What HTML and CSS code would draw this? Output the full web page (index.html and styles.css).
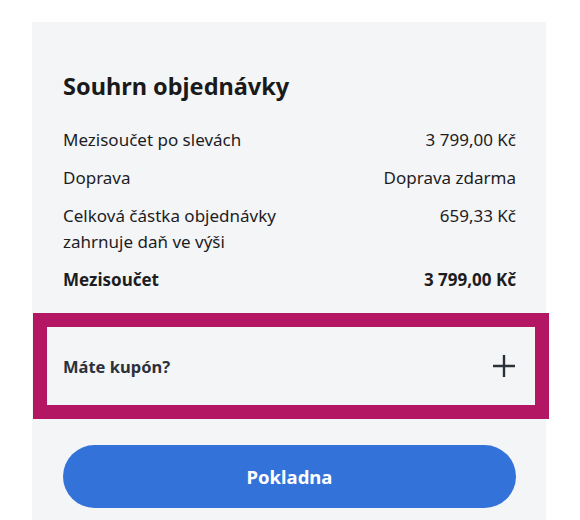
FILE: index.html
```html
<!DOCTYPE html>
<html lang="cs">
<head>
<meta charset="utf-8">
<link rel="stylesheet" href="styles.css">
</head>
<body>
<section class="summary">
  <h2 class="title">Souhrn objednávky</h2>
  <div class="rows">
    <div class="row"><span class="label">Mezisoučet po slevách</span><span class="value">3&nbsp;799,00&nbsp;Kč</span></div>
    <div class="row"><span class="label">Doprava</span><span class="value">Doprava zdarma</span></div>
    <div class="row"><span class="label">Celková částka objednávky<br>zahrnuje daň ve výši</span><span class="value">659,33&nbsp;Kč</span></div>
    <div class="row total"><span class="label">Mezisoučet</span><span class="value">3&nbsp;799,00&nbsp;Kč</span></div>
  </div>
  <div class="coupon">
    <span class="coupon-text">Máte kupón?</span>
    <svg class="plus" width="22" height="22" viewBox="0 0 22 22" aria-hidden="true"><path d="M11 0v22M0 11h22" stroke="#2b313b" stroke-width="2.4" fill="none"/></svg>
  </div>
  <button class="checkout">Pokladna</button>
</section>
</body>
</html>
```
FILE: styles.css
```css
* { box-sizing: border-box; }
body {
  margin: 0;
  background: #ffffff;
  font-family: "Noto Sans", "Open Sans", sans-serif;
  color: #1d1d1f;
  height: 520px;
  overflow: hidden;
}
.summary {
  margin: 22px 0 0 32px;
  width: 514px;
  min-height: 498px;
  background: #f4f5f7;
  padding: 48px 30px 0 31px;
}
.title {
  margin: 0;
  font-size: 23.5px;
  line-height: 32px;
  font-weight: 700;
  color: #1a1a1a;
}
.rows {
  margin-top: 25px;
  display: flex;
  flex-direction: column;
  gap: 12px;
}
.row {
  display: flex;
  justify-content: space-between;
  align-items: flex-start;
  font-size: 17px;
  line-height: 26px;
}
.value { text-align: right; }
.total { font-weight: 700; }
.coupon {
  margin: 34px -19px 0 -16px;
  height: 78px;
  outline: 14px solid #b31663;
  display: flex;
  align-items: center;
  justify-content: space-between;
  padding: 0 20px 0 16px;
}
.coupon-text {
  font-weight: 700;
  font-size: 16.5px;
  color: #2b313b;
}
.plus { display: block; }
.checkout {
  display: block;
  width: 100%;
  height: 63px;
  margin-top: 40px;
  border: none;
  border-radius: 32px;
  background: #3373d9;
  color: #ffffff;
  font-family: inherit;
  font-size: 18.5px;
  font-weight: 700;
}
```
